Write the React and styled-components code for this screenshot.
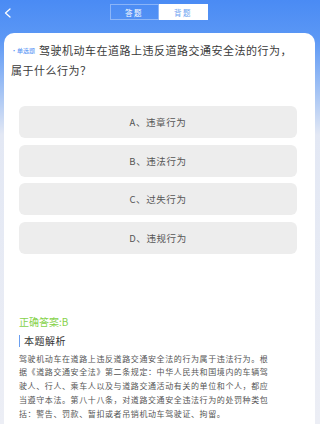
import React from 'react';
import styled, { createGlobalStyle } from 'styled-components';

const GlobalStyle = createGlobalStyle`
  html, body {
    margin: 0;
    padding: 0;
  }
  body {
    font-family: "Noto Sans CJK SC", "Noto Sans", sans-serif;
    background: #eceef5;
  }
`;

const Page = styled.div`
  min-height: 424px;
  overflow: hidden;
  background: linear-gradient(180deg, #4a8bf4 0px, #5c98f5 40px, #a9c6f4 95px, #e3e8f4 135px, #eceef5 100%);
`;

const Header = styled.div`
  height: 33px;
  display: grid;
  grid-template-columns: 1fr auto 1fr;
  align-items: start;
`;

const Back = styled.div`
  padding: 8px 0 0 4px;
  height: 10px;
  display: flex;
`;

const Tabs = styled.div`
  display: flex;
  margin-top: 4px;
  margin-left: -3px;
`;

const Tab = styled.div`
  width: 49px;
  height: 16px;
  box-sizing: border-box;
  display: flex;
  align-items: center;
  justify-content: center;
  font-size: 7.5px;
  letter-spacing: 1.5px;
  color: ${p => (p.active ? '#6a9ff0' : '#ffffff')};
  background: ${p => (p.active ? '#ffffff' : 'transparent')};
  border: 1px solid ${p => (p.active ? '#ffffff' : 'rgba(255,255,255,0.35)')};
`;

const Card = styled.div`
  margin: 0 5px 0 4px;
  min-height: 391px;
  background: #ffffff;
  border-radius: 10px 10px 0 0;
  padding: 7px 18px 4px 7px;
  box-sizing: border-box;
`;

const Question = styled.div`
  font-size: 11px;
  line-height: 20px;
  letter-spacing: 0.5px;
  color: #3a3a3a;
`;

const TypeTag = styled.span`
  display: inline-block;
  font-size: 6px;
  line-height: 8px;
  letter-spacing: 0;
  color: #4a8bf4;
  margin-right: 4px;
  vertical-align: 2px;
`;

const Options = styled.div`
  display: flex;
  flex-direction: column;
  gap: 6.5px;
  margin: 26px 0 0 8px;
`;

const Option = styled.div`
  height: 32px;
  border-radius: 6px;
  background: #ededed;
  display: flex;
  align-items: center;
  justify-content: center;
  font-size: 9.5px;
  letter-spacing: 0.6px;
  color: #555555;
`;

const Answer = styled.div`
  margin: 62px 0 0 8px;
  font-size: 10px;
  line-height: 12px;
  color: #86d24a;
`;

const Heading = styled.div`
  margin: 7px 0 0 8px;
  border-left: 1.5px solid #6a9ff0;
  padding-left: 4px;
  height: 12px;
  display: flex;
  align-items: center;
  font-size: 10px;
  letter-spacing: 0.5px;
  color: #333333;
`;

const Analysis = styled.p`
  margin: 5px 0 0 8px;
  width: 252px;
  font-size: 8px;
  line-height: 13.75px;
  letter-spacing: 0.6px;
  color: #555555;
`;

const options = ['A、违章行为', 'B、违法行为', 'C、过失行为', 'D、违规行为'];

export default function App() {
  return (
    <Page>
      <GlobalStyle />
      <Header>
        <Back>
          <svg width="7" height="10" viewBox="0 0 7 10">
            <path d="M6 1 L1.5 5 L6 9" fill="none" stroke="#ffffff" strokeWidth="1.3" strokeLinecap="round" strokeLinejoin="round" />
          </svg>
        </Back>
        <Tabs>
          <Tab>答题</Tab>
          <Tab active>背题</Tab>
        </Tabs>
        <div />
      </Header>
      <Card>
        <Question>
          <TypeTag>·单选题</TypeTag>
          驾驶机动车在道路上违反道路交通安全法的行为，属于什么行为？
        </Question>
        <Options>
          {options.map(o => (
            <Option key={o}>{o}</Option>
          ))}
        </Options>
        <Answer>正确答案:B</Answer>
        <Heading>本题解析</Heading>
        <Analysis>
          驾驶机动车在道路上违反道路交通安全法的行为属于违法行为。根据《道路交通安全法》第二条规定：中华人民共和国境内的车辆驾驶人、行人、乘车人以及与道路交通活动有关的单位和个人，都应当遵守本法。第八十八条，对道路交通安全违法行为的处罚种类包括：警告、罚款、暂扣或者吊销机动车驾驶证、拘留。
        </Analysis>
      </Card>
    </Page>
  );
}
